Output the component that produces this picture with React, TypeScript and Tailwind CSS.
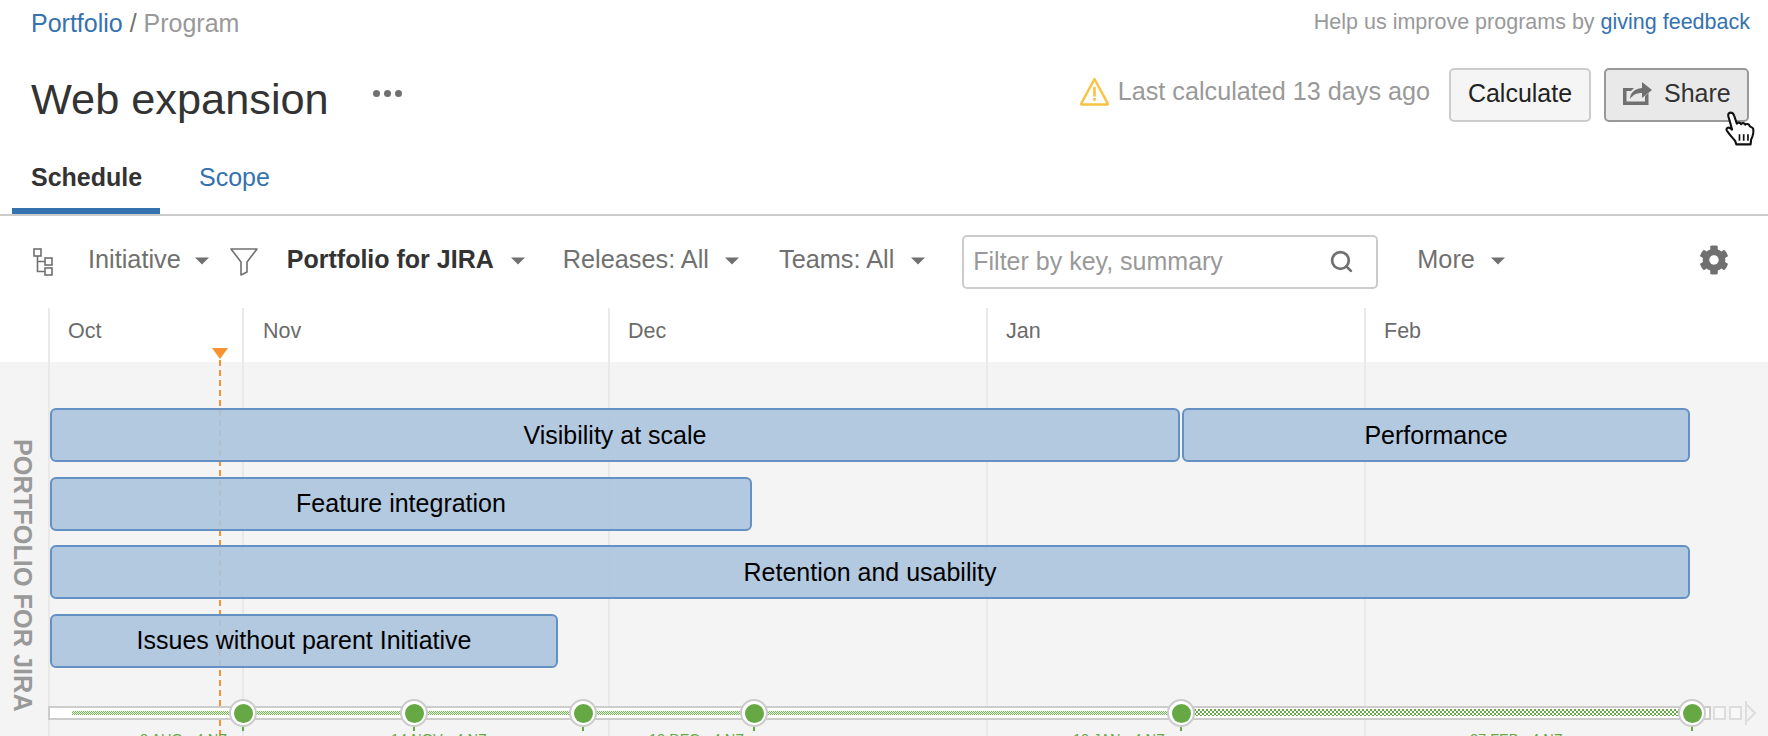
import { Search } from "lucide-react";
import { FaCog } from "react-icons/fa";

const months = [
  { name: "Oct", x: 48 },
  { name: "Nov", x: 242 },
  { name: "Dec", x: 608 },
  { name: "Jan", x: 986 },
  { name: "Feb", x: 1364 },
];

// timeline track starts at x=48
const TRACK_X = 48;
const milestones = [243, 414, 583, 754, 1181, 1692];
const sprintLabels = [
  { text: "3 AUG - 4 NZ", x: 140 },
  { text: "14 NOV - 4 NZ", x: 391 },
  { text: "12 DEC - 4 NZ", x: 649 },
  { text: "10 JAN - 4 NZ", x: 1073 },
  { text: "27 FEB - 4 NZ", x: 1470 },
];

function Caret() {
  return (
    <svg width="14" height="8" viewBox="0 0 14 8" className="shrink-0 mt-[2px]">
      <path d="M0 0.5h14L7 7.5z" fill="#707070" />
    </svg>
  );
}

function HierarchyIcon() {
  return (
    <svg width="20" height="28" viewBox="0 0 20 28" fill="none" stroke="#707070" strokeWidth="1.6" className="shrink-0 mt-[4px]">
      <rect x="1" y="1" width="7" height="7" />
      <rect x="12" y="10" width="7" height="7" />
      <rect x="12" y="20" width="7" height="7" />
      <path d="M4.5 8v15.5H12M4.5 13.5H12" />
    </svg>
  );
}

function FunnelIcon() {
  return (
    <svg width="28" height="28" viewBox="0 0 28 28" fill="none" stroke="#707070" strokeWidth="1.6" className="shrink-0 mt-[4px]">
      <path d="M1 1h26L17 14v10l-6 3V14z" strokeLinejoin="round" />
    </svg>
  );
}

function WarningIcon() {
  return (
    <svg width="29" height="29" viewBox="0 0 29 29" className="shrink-0">
      <path d="M14.5 2 27.8 26.6a.6.6 0 0 1-.5.9H1.7a.6.6 0 0 1-.5-.9z" fill="none" stroke="#f6c342" strokeWidth="2.4" strokeLinejoin="round" />
      <path d="M13.2 10h2.6v9.5h-2.6zM13.2 21h2.6v2.8h-2.6z" fill="#f6c342" />
    </svg>
  );
}

function ShareIcon() {
  return (
    <svg width="29" height="23" viewBox="0 0 29 23" className="shrink-0">
      <path d="M0 6h11L8 9H3.500v10.500H22V14l3.500-3v12H0z" fill="#707070" />
      <path d="M19 0l10 8-10 8v-5c-6 0-9 2-12 6 0-6 4-10 12-11z" fill="#707070" />
    </svg>
  );
}

function HandCursor() {
  return (
    <svg width="32" height="36" viewBox="0 0 30 34" className="absolute left-[1724px] top-[111px] z-20">
      <path
        d="M6 1.500c1.800 0 3 1.200 3.500 3L12 12c.5-1.500 3.500-1.500 4 .5.5-1.500 3.500-1.500 4 .5.8-1.200 3.500-1 4 1 .8 1.500 3 1 3.500 3 .5 3-.5 7-2 10l-.5 4.500H11.500l-1-3C8 25 4.500 22 2.500 18.500c-1-2 1-3.500 3-2.500l2 1.500L4 5c-.5-2 .5-3.500 2-3.500z"
        fill="#fff"
        stroke="#111"
        strokeWidth="2"
        strokeLinejoin="round"
      />
      <path d="M14.500 22v6M18.500 22v6M22.500 22v6" stroke="#111" strokeWidth="1.600" />
    </svg>
  );
}

function Bar({ label, className }: { label: string; className: string }) {
  return (
    <div className={`h-[54px] shrink-0 flex items-center justify-center rounded-[6px] border-2 border-[#6490c4] bg-[#acc4de]/90 text-black ${className}`}>
      {label}
    </div>
  );
}

export default function App() {
  return (
    <div className="relative w-[1768px] h-[736px] overflow-hidden bg-white text-[25px] leading-none text-[#333] [font-family:'Liberation_Sans',Arial,sans-serif]">
      {/* breadcrumb + feedback */}
      <div className="h-[46px] flex items-center justify-between pl-[31px] pr-[18px]">
        <div>
          <span className="text-[#3572b0]">Portfolio</span>
          <span className="text-[#707070]"> / </span>
          <span className="text-[#999]">Program</span>
        </div>
        <div className="text-[21.5px] text-[#999]">
          Help us improve programs by <span className="text-[#3572b0]">giving feedback</span>
        </div>
      </div>

      {/* title row */}
      <div className="h-[104px] flex items-start pl-[31px] pr-[19px]">
        <div className="mt-[29px] text-[43.3px] leading-[48px]">Web expansion</div>
        <div className="ml-[44px] mt-[44px] flex gap-[4px]">
          <span className="w-[7px] h-[7px] rounded-full bg-[#707070]" />
          <span className="w-[7px] h-[7px] rounded-full bg-[#707070]" />
          <span className="w-[7px] h-[7px] rounded-full bg-[#707070]" />
        </div>
        <div className="ml-auto mt-[22px] flex items-center">
          <div className="flex items-center mb-[7px]">
            <WarningIcon />
            <span className="ml-[9px] text-[25.2px] text-[#999]">Last calculated 13 days ago</span>
          </div>
          <button className="ml-[19px] w-[142px] h-[54px] pb-[3px] rounded-[5px] border-2 border-[#ccc] bg-[#f5f5f5] text-[#222]">Calculate</button>
          <button className="ml-[13px] w-[145px] h-[54px] pb-[3px] rounded-[5px] border-2 border-[#999] bg-[#e9e9e9] text-[#333] flex items-center pl-[17px] gap-[12px]">
            <ShareIcon />
            Share
          </button>
        </div>
      </div>
      <HandCursor />

      {/* tabs */}
      <div className="h-[66px] flex items-end pl-[12px] gap-[20px] border-b-2 border-[#ccc]">
        <div className="w-[148px] h-[58px] pl-[19px] pt-[9px] border-b-[6px] border-[#3572b0] font-bold">Schedule</div>
        <div className="h-[58px] pl-[19px] pt-[9px] text-[#3572b0]">Scope</div>
      </div>

      {/* toolbar */}
      <div className="h-[92px] flex items-center pl-[33px] pr-[39px] pb-[5px] text-[25.3px] text-[#707070]">
        <HierarchyIcon />
        <span className="ml-[35px]">Initiative</span>
        <span className="ml-[14px]"><Caret /></span>
        <span className="ml-[21px]"><FunnelIcon /></span>
        <span className="ml-[29px] text-[25px] font-bold text-[#333]">Portfolio for JIRA</span>
        <span className="ml-[17px]"><Caret /></span>
        <span className="ml-[38px]">Releases: All</span>
        <span className="ml-[16px]"><Caret /></span>
        <span className="ml-[40px]">Teams: All</span>
        <span className="ml-[17px]"><Caret /></span>
        <div className="ml-[37px] mt-[4px] w-[416px] h-[54px] rounded-[5px] border-2 border-[#ccc] flex items-center pl-[9px] pr-[22px] text-[25px]">
          <input
            placeholder="Filter by key, summary"
            className="flex-1 min-w-0 outline-none bg-transparent placeholder:text-[#999]"
          />
          <Search size={25} strokeWidth={2.6} color="#707070" />
        </div>
        <span className="ml-[39px]">More</span>
        <span className="ml-[16px]"><Caret /></span>
        <FaCog size={30} color="#707070" className="ml-auto" />
      </div>

      {/* chart */}
      <div className="relative h-[428px]">
        {months.map((m) => (
          <div key={m.name} className="absolute top-0 bottom-0 w-[2px] bg-[#e9e9e9] z-[1]" style={{ left: m.x }} />
        ))}

        {/* today marker */}
        <div className="absolute left-[212px] top-[40px] z-[2] w-0 h-0 border-x-[8px] border-t-[11px] border-x-transparent border-t-[#f79232]" />
        <div className="absolute left-[219px] top-[52px] bottom-0 z-[2] w-[2px] bg-[repeating-linear-gradient(to_bottom,#f79232_0_6px,transparent_6px_10px)]" />

        {/* month labels */}
        <div className="h-[54px] flex text-[21.5px] text-[#6b6b6b]">
          <div className="w-[243px] pl-[68px] pt-[13px]">Oct</div>
          <div className="w-[366px] pl-[20px] pt-[13px]">Nov</div>
          <div className="w-[378px] pl-[19px] pt-[13px]">Dec</div>
          <div className="w-[378px] pl-[19px] pt-[13px]">Jan</div>
          <div className="pl-[19px] pt-[13px]">Feb</div>
        </div>

        <div className="h-[374px] bg-[#f4f4f4] flex">
          <div className="w-[50px] shrink-0 pl-[10px] pt-[77px]">
            <div className="[writing-mode:vertical-rl] text-[25.3px] font-bold text-[#999] whitespace-nowrap">PORTFOLIO FOR JIRA</div>
          </div>

          <div className="relative z-[3] flex-1 pt-[46px] flex flex-col gap-[14.67px]">
            <div className="flex gap-[2px]">
              <Bar label="Visibility at scale" className="w-[1130px]" />
              <Bar label="Performance" className="w-[508px]" />
            </div>
            <Bar label="Feature integration" className="w-[702px]" />
            <Bar label="Retention and usability" className="w-[1640px]" />
            <Bar label="Issues without parent Initiative" className="w-[508px]" />
          </div>
        </div>

        {/* timeline */}
        <div className="absolute z-[4] left-[48px] top-[398px] h-[14px] flex items-center">
          <div className="relative w-[1663px] h-[14px] border-2 border-[#ccc] bg-white">
            <div className="absolute left-[22px] top-[3px] w-[1110px] h-[4px] bg-[repeating-conic-gradient(#7db562_0_25%,#e4efdd_0_50%)] bg-[length:2px_2px]" />
            <div className="absolute left-[1130px] top-[1px] w-[510px] h-[7px] bg-[repeating-conic-gradient(#65a844_0_25%,#fff_0_50%)] bg-[length:4px_4px]" />
          </div>
          <div className="ml-[2px] w-[13px] h-[14px] border-2 border-[#ddd] bg-[#f8f8f8] shrink-0" />
          <div className="ml-[3px] w-[13px] h-[14px] border-2 border-[#ddd] bg-[#f8f8f8] shrink-0" />
          <svg width="12" height="24" viewBox="0 0 12 24" className="ml-[3px] shrink-0" fill="none" stroke="#ddd" strokeWidth="2">
            <path d="M1 0v24M2 4l8 8-8 8" />
          </svg>

          {milestones.map((x) => (
            <div key={x} className="absolute top-[-7px] flex flex-col items-center w-[28px]" style={{ left: x - TRACK_X - 14 }}>
              <div className="w-[28px] h-[28px] rounded-full border-2 border-[#ccc] bg-white flex items-center justify-center">
                <div className="w-[19px] h-[19px] rounded-full bg-[#65a844]" />
              </div>
              <div className="w-[2px] h-[4px] bg-[#65a844]" />
            </div>
          ))}

          {sprintLabels.map((l) => (
            <div key={l.x} className="absolute top-[25.5px] text-[14.5px] leading-none whitespace-nowrap text-[#65a844]" style={{ left: l.x - TRACK_X }}>
              {l.text}
            </div>
          ))}
        </div>
      </div>
    </div>
  );
}
